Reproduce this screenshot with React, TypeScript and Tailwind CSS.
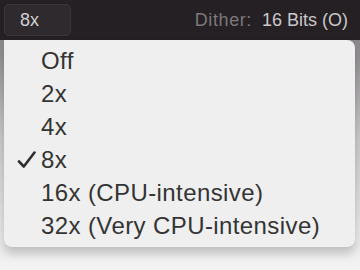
import React from "react";

const items = [
  { label: "Off", checked: false },
  { label: "2x", checked: false },
  { label: "4x", checked: false },
  { label: "8x", checked: true },
  { label: "16x (CPU-intensive)", checked: false },
  { label: "32x (Very CPU-intensive)", checked: false },
];

const CheckMark = () => (
  <svg width="20" height="18" viewBox="0 0 20 18" className="text-[#2e2e2e]">
    <path
      d="M2 10.5 L6.8 15.5 L17.5 1.5"
      fill="none"
      stroke="currentColor"
      strokeWidth="2.6"
      strokeLinecap="round"
      strokeLinejoin="round"
    />
  </svg>
);

export default function App() {
  return (
    <div
      className="flex h-[270px] w-[360px] flex-col overflow-hidden bg-gradient-to-b from-[#6f6d6f] via-[#c9c8c9] to-[#f4f4f4]"
      style={{ fontFamily: '"Liberation Sans", Arial, sans-serif' }}
    >
      {/* top bar */}
      <div className="flex h-[40px] shrink-0 items-center justify-between bg-[#242023] pl-[4px] pr-[12px]">
        <div className="flex h-[32px] w-[67px] items-center rounded-[5px] border border-[#3a363a] bg-[#2e2a2d] pl-[15px] text-[18px] text-[#d2ced1]">
          8x
        </div>
        <div className="flex items-center text-[18px]">
          <span className="tracking-[0.6px] text-[#7c787b]">Dither:</span>
          <span className="ml-[10px] text-[#cbc7ca]">16 Bits (O)</span>
        </div>
      </div>

      {/* dropdown menu */}
      <div className="ml-[4px] mr-[5px] rounded-tr-[8px] rounded-b-[8px] border-b border-[#c4c4c4] bg-[#efefef] pt-[4px] pb-[5px] shadow-[0_6px_10px_rgba(0,0,0,0.18)]">
        {items.map((item) => (
          <div
            key={item.label}
            className="flex h-[33px] items-center text-[24px] leading-none tracking-[0.4px] text-[#343434]"
          >
            <div className="flex w-[37px] justify-end pr-[4px]">
              {item.checked ? <CheckMark /> : null}
            </div>
            <span>{item.label}</span>
          </div>
        ))}
      </div>
    </div>
  );
}
